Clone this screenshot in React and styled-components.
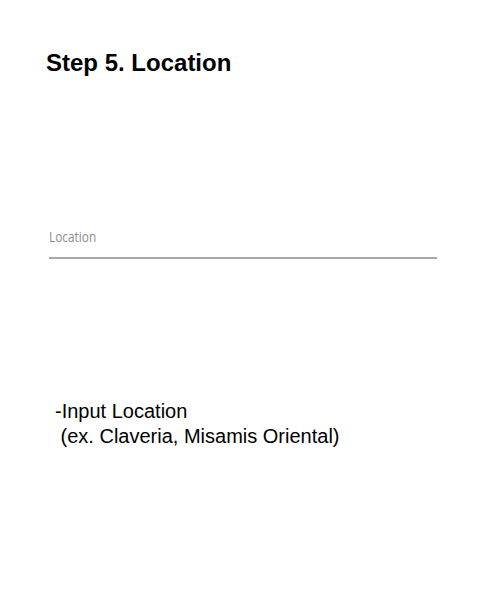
import React from "react";
import styled, { createGlobalStyle } from "styled-components";

const GlobalStyle = createGlobalStyle`
  html, body {
    margin: 0;
    padding: 0;
    background: #ffffff;
  }
  body {
    font-family: "Liberation Sans", Arial, sans-serif;
    color: #000000;
  }
`;

const Page = styled.section`
  width: 500px;
  min-height: 602px;
  box-sizing: border-box;
  padding: 49px 0 0 46px;
`;

const Title = styled.h2`
  margin: 0;
  font-size: 24px;
  line-height: 28px;
  font-weight: bold;
  color: #000;
`;

const Field = styled.div`
  width: 388px;
  margin: 149px 0 0 3px;
  padding-bottom: 11px;
  border-bottom: 2px solid #a8a8a8;
`;

Field.Label = styled.span`
  display: inline-block;
  font-family: "Open Sans", sans-serif;
  font-size: 15px;
  line-height: 20px;
  color: #8c8c8c;
  transform: scaleX(0.79);
  transform-origin: left center;
`;

const Note = styled.p`
  margin: 140px 0 0 9px;
  font-size: 20px;
  line-height: 25px;
  white-space: pre;
  color: #000;
`;

export default () => {
  return (
    <>
      <GlobalStyle />
      <Page>
        <Title>Step 5. Location</Title>
        <Field>
          <Field.Label>Location</Field.Label>
        </Field>
        <Note>
          {"-Input Location\n (ex. Claveria, Misamis Oriental)"}
        </Note>
      </Page>
    </>
  );
};
